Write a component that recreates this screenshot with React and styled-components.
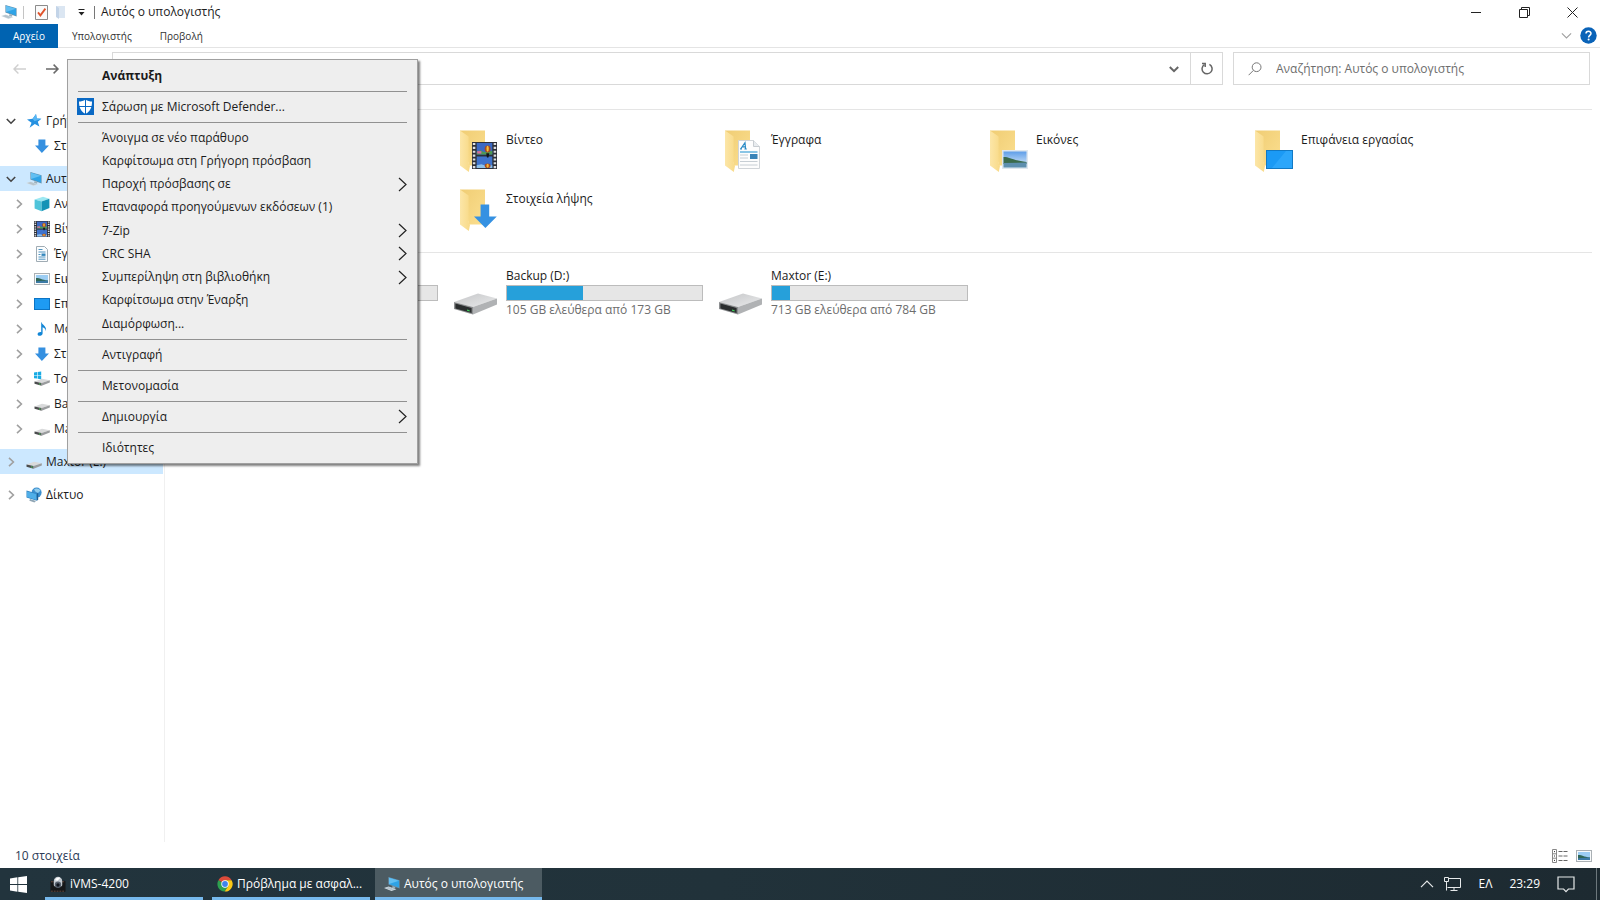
import { useState } from "react";
import styled, { createGlobalStyle } from "styled-components";


const GlobalStyle = createGlobalStyle`
  * {
    box-sizing: border-box;
  }

  body {
    margin: 0;
    background: #fff;
    color: #1b1b1b;
    font-family: "Open Sans", "Noto Sans", sans-serif;
    font-size: 12px;
    line-height: 18px;
  }

  button,
  input {
    font: inherit;
    color: inherit;
    border: 0;
    padding: 0;
    background: none;
  }

  a {
    color: inherit;
    text-decoration: none;
  }

  ul {
    margin: 0;
    padding: 0;
    list-style: none;
  }

  svg {
    display: block;
    flex: none;
  }
`

const Screen = styled.div`
  position: relative;
  display: flex;
  flex-direction: column;
  min-height: 100vh;
`

const TitleBar = styled.header`
  display: flex;
  align-items: center;
  height: 24px;
  padding: 0 4px 0 1px;
`

const QuickTools = styled.div`
  display: flex;
  align-items: center;
  gap: 6px;

  button {
    display: grid;
    place-items: center;
    width: 14px;
    height: 20px;
  }
`

const Divider = styled.span`
  width: 1px;
  height: 13px;
  margin-right: ${props => props.$dark ? "0" : "4px"};
  background: ${props => props.$dark ? "#777" : "#c4c4c4"};
`

const Title = styled.h1`
  margin: 0;
  padding-left: 6px;
  flex: 1;
  font-size: 12px;
  font-weight: 400;
`

const WindowButton = styled.button`
  display: grid;
  place-items: center;
  width: 48px;
  height: 24px;
`

const Ribbon = styled.nav`
  display: flex;
  align-items: center;
  height: 24px;
  padding-right: 3px;
  border-bottom: 1px solid #e4e4e4;
`

const RibbonTab = styled.button`
  height: 24px;
  width: ${props => props.$file ? "58px" : "auto"};
  padding: ${props => props.$file ? "0" : "0 14px"};
  font-size: 10px;
  color: ${props => props.$file ? "#fff" : "#333"};
  background: ${props => props.$file ? "#0063b1" : "transparent"};
`

const RibbonEnd = styled.div`
  display: flex;
  align-items: center;
  gap: 8px;
  margin-left: auto;
`

const AddressRow = styled.div`
  display: flex;
  align-items: center;
  padding: 4px 10px 4px 12px;
`

const NavButtons = styled.div`
  display: flex;
  gap: 16px;
  width: 100px;
`

const Address = styled.div`
  display: flex;
  align-items: center;
  flex: 1;
  height: 33px;
  border: 1px solid #d9d9d9;

  span {
    flex: 1;
    padding-left: 8px;
  }

  button {
    display: grid;
    place-items: center;
    width: 32px;
    height: 31px;
  }

  button:last-child {
    border-left: 1px solid #d9d9d9;
  }
`

const SearchBox = styled.label`
  display: flex;
  align-items: center;
  gap: 14px;
  width: 357px;
  height: 33px;
  margin-left: 10px;
  padding-left: 14px;
  border: 1px solid #d9d9d9;

  input {
    flex: 1;
    outline: 0;
  }

  input::placeholder {
    color: #6d6d6d;
    opacity: 1;
  }
`

const Body = styled.div`
  display: flex;
  flex: 1;
  padding-top: 11px;
`

const Tree = styled.ul`
  width: 165px;
  padding-top: 8px;
  border-right: 1px solid #f0f0f0;
`

const TreeRow = styled.li`
  margin-top: ${props => props.$spaced ? "8px" : "0"};

  a {
    display: flex;
    align-items: center;
    height: 25px;
    padding-left: ${props => props.$level ? "12px" : "4px"};
    margin-right: 1px;
    white-space: nowrap;
    background: ${props => props.$active ? "#cce8ff" : "transparent"};
  }
`

const Twisty = styled.span`
  display: grid;
  place-items: center;
  flex: none;
  width: 14px;
  margin-right: 8px;
`

const TreeLabel = styled.span`
  padding-left: 4px;
`

const Content = styled.main`
  flex: 1;
  padding-right: 8px;
`

const GroupHeader = styled.h2`
  display: flex;
  align-items: center;
  gap: 8px;
  height: 18px;
  margin: ${props => props.$next ? "9px 0 6px" : "0 0 9px"};
  padding-left: 10px;
  font-size: 12px;
  font-weight: 400;
  color: #1e3287;

  &::after {
    content: "";
    flex: 1;
    height: 1px;
    background: #e5e5e5;
  }
`

const TileGrid = styled.div`
  display: grid;
  grid-template-columns: repeat(auto-fill, 265px);
  row-gap: 11px;
  padding-left: 23px;
`

const Tile = styled.a`
  display: flex;
  gap: 5px;
`

const TileLabel = styled.span`
  padding-top: 4px;
`

const DriveInfo = styled.div`
  width: 197px;
`

const Meter = styled.div`
  height: 16px;
  border: 1px solid #bcbcbc;
  background: #e6e6e6;
`

const MeterFill = styled.div`
  height: 14px;
  background: #26a0da;
`

const DriveNote = styled.div`
  color: #6d6d6d;
  white-space: nowrap;
`

const StatusBar = styled.footer`
  display: flex;
  align-items: center;
  justify-content: space-between;
  height: 26px;
  padding: 2px 8px 0 15px;
  color: #2b3a55;

  div {
    display: flex;
    gap: 8px;
  }
`

// context menu floats over the tree and the folder list
const Menu = styled.div`
  position: absolute;
  left: 67px;
  top: 59px;
  width: 351px;
  padding: 5px 0 3px;
  border: 1px solid #a0a0a0;
  background: #eee;
  box-shadow: 2px 2px 2px rgba(0, 0, 0, 0.5);
`

const MenuGroup = styled.div`
  display: flex;
  flex-direction: column;
  justify-content: space-between;
  min-height: ${props => props.$long ? "209px" : "0"};
`

const MenuLine = styled.hr`
  height: 1px;
  margin: 3px 10px 4px;
  border: 0;
  background: #919191;
`

const MenuItem = styled.button`
  display: flex;
  align-items: center;
  width: 100%;
  height: 23px;
  padding: 0 10px 2px 9px;
  font-weight: ${props => props.$bold ? 700 : 400};
  text-align: left;

  > span:first-child {
    width: 25px;
  }

  > span:nth-child(2) {
    flex: 1;
  }
`

const Taskbar = styled.footer`
  display: flex;
  align-items: center;
  height: 32px;
  color: #fff;
  background: linear-gradient(90deg, #22343d, #21323a 45%, #1d2a31);
`

const StartButton = styled.button`
  display: grid;
  place-items: center;
  width: 36px;
  height: 32px;
  margin-right: 9px;
`

const TaskButton = styled.button`
  display: flex;
  align-items: center;
  gap: 4px;
  width: ${props => props.$active ? "167px" : "158px"};
  height: 32px;
  margin-right: ${props => props.$last ? "5px" : "9px"};
  padding: 0 0 0 ${props => props.$active ? "9px" : "5px"};
  box-shadow: inset 0 -3px #76b9ed;
  background: ${props => props.$active ? "#4c5b62" : "transparent"};
  white-space: nowrap;
`

const Tray = styled.div`
  display: flex;
  align-items: center;
  gap: 17px;
  margin-left: auto;

  button {
    display: grid;
    place-items: center;
    height: 32px;
  }

  button:first-child {
    margin-right: -7px;
  }
`

const ShowDesktop = styled.span`
  width: 1px;
  height: 32px;
  margin: 0 3px 0 4px;
  background: #6c777c;
`


function Chevron({ dir = "right", size = 10, color = "#a0a0a0", width = 2 }) {
    const d = dir === "right" ? "M3 0.8 7.4 5 3 9.2" : "M0.8 3 5 7.2 9.2 3";
    return (
        <svg width={size} height={size} viewBox="0 0 10 10" fill="none" stroke={color} strokeWidth={width}>
            <path d={d} />
        </svg>
    )
}

function PcIcon() {
    return (
        <svg width="16" height="16" viewBox="0 0 16 16">
            <path d="M0 12 4.6 10.4 12.4 13.2 7.5 15z" fill="#d3dde3" />
            <path d="M1.4 12 4.8 11 10.5 13.2 7.3 14.3z" fill="#b5c3cc" />
            <path d="M4.4 1 15.6 4.2V12.4L4.4 8.4z" fill="#6593b0" />
            <path d="M5 1.8 15 4.8V11.6L5 8z" fill="#2fa3e6" />
            <path d="M5 1.8 15 4.8 5 8z" fill="#62bff2" />
            <path d="M8.6 9.9 11.4 10.9 11 12.8 8 11.8z" fill="#9db0bb" />
        </svg>
    )
}

function StarIcon() {
    return (
        <svg width="16" height="16" viewBox="0 0 16 16">
            <path d="M10 1 10.8 5.6 15.4 5.8 11.8 8.8 13.4 13.6 8.8 11 3.6 14.8 5.5 9.8 1 6.4 6.6 5.8z" fill="#2590e0" />
            <path d="M10 1 10.8 5.6 15.4 5.8 8.5 8.3 6.6 5.8z" fill="#58b6f4" />
        </svg>
    )
}

function DownIcon() {
    return (
        <svg width="16" height="16" viewBox="0 0 16 16">
            <path d="M4.4 1.4H11.4V7.4H15L7.9 15 1 7.4H4.4z" fill="#3590e0" />
        </svg>
    )
}

function CubeIcon() {
    return (
        <svg width="16" height="16" viewBox="0 0 16 16">
            <path d="M0.6 3.4 9 0.8 15.4 2.8 7.6 5.6z" fill="#9ce8f2" />
            <path d="M0.6 3.4 7.6 5.6V15.2L0.6 12.4z" fill="#4fc4da" />
            <path d="M7.6 5.6 15.4 2.8V12L7.6 15.2z" fill="#1593b6" />
        </svg>
    )
}

function FilmArt() {
    return (
        <>
            <rect width="24" height="28" fill="#2d2f37" />
            <path d="M2 1V28M22 1V28" stroke="#dfe1e4" strokeWidth="2.4" strokeDasharray="2.2 1.8" />
            <rect x="4.5" y="1" width="15" height="12" fill="#3c69c4" />
            <rect x="4.5" y="15" width="15" height="12" fill="#3f73cc" />
            <path d="M4.5 10 8 8.5 12 10.5 19.5 9V13H4.5z" fill="#4f9a54" />
            <path d="M5 9.5h4v2.5h-4z" fill="#d869a4" />
            <path d="M4.5 24 9 23 14 25 19.5 24V27H4.5z" fill="#8ec1ea" />
            <ellipse cx="15" cy="7.2" rx="2.8" ry="3.6" fill="#a8481f" />
            <ellipse cx="15" cy="7" rx="1.1" ry="3.2" fill="#f4c23b" />
            <path d="M13.6 11.6h3l-0.8 4.4h-1.4z" fill="#151515" />
            <ellipse cx="15" cy="24.6" rx="2.8" ry="2.4" fill="#a8481f" />
            <ellipse cx="15" cy="24.6" rx="1.1" ry="2" fill="#f1b936" />
        </>
    )
}

function FilmIcon() {
    return <svg width="16" height="16" viewBox="0 0 24 28" preserveAspectRatio="none"><FilmArt /></svg>
}

function DocIcon() {
    return (
        <svg width="16" height="16" viewBox="0 0 16 16">
            <path d="M2.5 0.5H10.5L13.5 3.5V15.5H2.5z" fill="#fbfdfe" stroke="#a0acb4" />
            <path d="M4.5 3.5h4M4.5 6h7M4.5 8.5h2M4.5 11h7M4.5 13.2h7" stroke="#4e93c0" />
            <path d="M7.5 7.5h4v2.4h-4z" fill="#3487bd" />
        </svg>
    )
}

function PictureIcon() {
    return (
        <svg width="16" height="16" viewBox="0 0 16 16">
            <rect x="0.5" y="2.5" width="15" height="11" fill="#f8fafb" stroke="#aab0b4" />
            <rect x="2" y="4" width="12" height="8" fill="#9ccdf3" />
            <path d="M2 7C5 6.4 7 8.6 14 9.4V12H2z" fill="#2f6655" />
            <path d="M2 10.2 14 9.6V12H2z" fill="#3c7aa6" />
        </svg>
    )
}

function DesktopIcon() {
    return (
        <svg width="16" height="16" viewBox="0 0 16 16">
            <rect x="0.5" y="2.5" width="15" height="11" fill="#1e9bf3" stroke="#0c74c4" />
        </svg>
    )
}

function MusicIcon() {
    return (
        <svg width="16" height="16" viewBox="0 0 16 16">
            <path d="M7.4 1C8 4 13 5 12 10.2 11.6 7.6 10 6.6 8.6 6.2V12.4C8.6 14.6 4 15.8 3.6 13.4 3.4 11.6 6 10.8 7.2 11.2V1z" fill="#1286d6" />
        </svg>
    )
}

function DriveIcon({ windows }) {
    return (
        <svg width="16" height="16" viewBox="0 0 16 16">
            <path d="M0.5 10.6 8 7.8 15.8 9.2 7.6 12z" fill="#d9dadb" />
            <path d="M0.5 10.6 7.6 12V14.8L0.5 12.8z" fill="#4b4d4e" />
            <path d="M7.6 12 15.8 9.2V11.4L7.6 14.8z" fill="#9a9c9e" />
            <path d="M5 13h1.6" stroke="#4bd05c" />
            {windows && <path d="M0 1.4 3 1V4H0zM3.6 0.9 7.2 0.4V4H3.6zM0 4.6H3V7.6L0 7.2zM3.6 4.6H7.2V8.2L3.6 7.7z" fill="#18abe4" />}
        </svg>
    )
}

function NetworkIcon() {
    return (
        <svg width="16" height="16" viewBox="0 0 16 16">
            <circle cx="10.6" cy="5.6" r="5" fill="#3c8fcf" />
            <path d="M8 2.4C10 0.6 13 1.4 14.6 3.4L12 6 9.6 4.8z" fill="#8fcbec" />
            <path d="M0.5 3.6 10.8 6.6V13.8L0.5 10.4z" fill="#2f83c2" />
            <path d="M1 4.4 10.4 7.1V13.1L1 10z" fill="#4faee8" />
            <path d="M4 12 10 14 8.4 15.4 3.4 13.8z" fill="#8fa5b3" />
            <path d="M10.8 6.6 12.2 6V12.8L10.8 13.8z" fill="#1c5e96" />
        </svg>
    )
}

function FolderTileIcon({ kind }) {
    return (
        <svg width="48" height="48" viewBox="0 0 48 48" aria-hidden="true">
            <defs>
                <linearGradient id="back" x1="0" y1="0" x2="1" y2="1">
                    <stop offset="0" stopColor="#f0cd74" />
                    <stop offset="1" stopColor="#fbdf90" />
                </linearGradient>
                <linearGradient id="front" x1="0" y1="0" x2="1" y2="0">
                    <stop offset="0" stopColor="#fce6a8" />
                    <stop offset="1" stopColor="#f8da88" />
                </linearGradient>
                <linearGradient id="sky" x1="0" y1="0" x2="0" y2="1">
                    <stop offset="0" stopColor="#5f9ee8" />
                    <stop offset="1" stopColor="#e2f0fb" />
                </linearGradient>
            </defs>
            <path d="M7 3.5H32V38.5H16z" fill="url(#back)" />
            <path d="M7 3.5 15.6 9.4V36L17 39 15.8 45 7 38.6z" fill="url(#front)" />
            {kind === "video" && (
                <svg x="19" y="15" width="25" height="27" viewBox="0 0 24 28" preserveAspectRatio="none"><FilmArt /></svg>
            )}
            {kind === "docs" && (
                <g>
                    <path d="M20.5 13.5H35.5L41.5 19.5V41.5H20.5z" fill="#fdfdfd" stroke="#d0d4d8" />
                    <path d="M35.5 13.5V19.5H41.5" fill="#e8ecef" stroke="#c7ccd1" />
                    <path d="M22.6 22 27 15.6 27.6 22M24 19.8H27.6M22 22h2M26.4 22h2.4" stroke="#2b8bc6" strokeWidth="1.2" fill="none" />
                    <path d="M22 25h17.5" stroke="#3fa0d6" strokeWidth="1.2" />
                    <path d="M22 28h8M22 31h8M22 34.5h17.5M22 38h17.5" stroke="#c7ced4" />
                    <rect x="32" y="27" width="7.5" height="5" fill="#3a84b8" />
                </g>
            )}
            {kind === "pictures" && (
                <g>
                    <rect x="19" y="23" width="26" height="19" fill="#dfe7ee" />
                    <rect x="20.5" y="24.5" width="23" height="16" fill="url(#sky)" />
                    <path d="M20.5 30C26 29.6 30 33.6 43.5 35V37H20.5z" fill="#3b6b4c" />
                    <path d="M20.5 36 43.5 35.6V40.5H20.5z" fill="#5d8fae" />
                </g>
            )}
            {kind === "desktop" && (
                <g>
                    <rect x="18.5" y="23.5" width="26" height="18" fill="#1b9af5" stroke="#1279c4" />
                    <path d="M24 41 38 24H44V41z" fill="#2ca6fa" />
                </g>
            )}
            {kind === "downloads" && <path d="M27.6 18.6H36.2V30.4H43.8L32.4 42 21 30.4H27.6z" fill="#3591e2" />}
            {kind === "music" && <path d="M30 18C31 24 42 26 40 36 38 30 34 29 33 28.6V38C33 43 23 44 23 39.6 23 36 28 35.4 30 36z" fill="#1286d6" />}
            {kind === "objects" && <path d="M20 24 32 20 44 24V36L32 42 20 36z" fill="#3bbad2" />}
        </svg>
    )
}

function DriveTileIcon() {
    return (
        <svg width="48" height="53" viewBox="0 0 48 53" aria-hidden="true">
            <defs>
                <linearGradient id="lid" x1="0" y1="0" x2="1" y2="1">
                    <stop offset="0" stopColor="#c4c5c7" />
                    <stop offset="1" stopColor="#eaebec" />
                </linearGradient>
            </defs>
            <path d="M1 35 25 26.4 44 31.4 20 40z" fill="url(#lid)" />
            <path d="M20 40 44 31.4V37.6L20 47.6z" fill="#b0b2b4" />
            <path d="M1 35 20 40V47.6L1 42z" fill="#8d8f91" />
            <path d="M2.4 36.6 18.6 41V46L2.4 41.4z" fill="#2a2d2e" />
            <path d="M14 42.4 16.6 43.2V44.6L14 43.8z" fill="#3fcf5a" />
        </svg>
    )
}

function WindowsLogo() {
    return (
        <svg width="17" height="17" viewBox="0 0 17 17" fill="#fff">
            <path d="M0 2.4 7.4 1.3V8H0zM8.2 1.2 17 0V8H8.2zM0 8.9H7.4V15.7L0 14.6zM8.2 8.9H17V17L8.2 15.8z" />
        </svg>
    )
}

function CameraIcon() {
    return (
        <svg width="16" height="17" viewBox="0 0 17 17">
            <rect x="0.5" y="4.5" width="16" height="12" rx="1" fill="#161819" />
            <path d="M1 15.6h15M1 5.6h15" stroke="#6d4e42" strokeDasharray="2 1" />
            <path d="M4 5C4 -1.4 13 -1.4 13 5V9C13 12 4 12 4 9z" fill="#c3cad0" />
            <circle cx="8.5" cy="8.8" r="3.4" fill="#56606c" />
            <circle cx="8.5" cy="9" r="1.8" fill="#10151e" />
            <path d="M5.4 4C6.2 1 9 0.6 10.8 1.6L8 4.6z" fill="#fff" />
        </svg>
    )
}

function ChromeIcon() {
    return (
        <svg width="16" height="16" viewBox="0 0 16 16">
            <path d="M8 8 1.4 4.2A7.6 7.6 0 0 1 14.6 4.2H8z" fill="#dd4b3a" />
            <path d="M8 8 1.4 4.2A7.6 7.6 0 0 0 7.6 15.6L11.3 9.9z" fill="#2da04f" />
            <path d="M8 8V4.2H14.6A7.6 7.6 0 0 1 7.6 15.6L11.3 9.9z" fill="#fbc916" />
            <circle cx="8" cy="8" r="3.7" fill="#fff" />
            <circle cx="8" cy="8" r="2.9" fill="#3f83ea" />
        </svg>
    )
}

function ShieldIcon() {
    return (
        <svg width="17" height="17" viewBox="0 0 17 17">
            <rect width="17" height="17" fill="#0a69c4" />
            <path d="M8.5 1.4C10.4 3 13 3.4 15 3.4 15 9.4 13.2 13.4 8.5 15.8 3.8 13.4 2 9.4 2 3.4 4 3.4 6.6 3 8.5 1.4z" fill="#fff" />
            <path d="M8.5 1V16M1.6 8.5H15.4" stroke="#0a69c4" strokeWidth="1" />
        </svg>
    )
}


const tree = [
    { label: "Γρήγορη πρόσβαση", icon: <StarIcon />, open: true },
    { label: "Στοιχεία λήψης", icon: <DownIcon />, level: 1, leaf: true },
    { label: "Αυτός ο υπολογιστής", icon: <PcIcon />, open: true, spaced: true, active: true },
    { label: "Αντικείμενα 3D", icon: <CubeIcon />, level: 1 },
    { label: "Βίντεο", icon: <FilmIcon />, level: 1 },
    { label: "Έγγραφα", icon: <DocIcon />, level: 1 },
    { label: "Εικόνες", icon: <PictureIcon />, level: 1 },
    { label: "Επιφάνεια εργασίας", icon: <DesktopIcon />, level: 1 },
    { label: "Μουσική", icon: <MusicIcon />, level: 1 },
    { label: "Στοιχεία λήψης", icon: <DownIcon />, level: 1 },
    { label: "Τοπικός Δίσκος (C:)", icon: <DriveIcon windows />, level: 1 },
    { label: "Backup (D:)", icon: <DriveIcon />, level: 1 },
    { label: "Maxtor (E:)", icon: <DriveIcon />, level: 1 },
    { label: "Maxtor (E:)", icon: <DriveIcon />, spaced: true, active: true },
    { label: "Δίκτυο", icon: <NetworkIcon />, spaced: true },
]

const folders = [
    { label: "Αντικείμενα 3D", kind: "objects" },
    { label: "Βίντεο", kind: "video" },
    { label: "Έγγραφα", kind: "docs" },
    { label: "Εικόνες", kind: "pictures" },
    { label: "Επιφάνεια εργασίας", kind: "desktop" },
    { label: "Μουσική", kind: "music" },
    { label: "Στοιχεία λήψης", kind: "downloads" },
]

const drives = [
    { label: "Τοπικός Δίσκος (C:)", used: 50, note: "" },
    { label: "Backup (D:)", used: 39, note: "105 GB ελεύθερα από 173 GB" },
    { label: "Maxtor (E:)", used: 9, note: "713 GB ελεύθερα από 784 GB" },
]

const menuGroups = [
    [{ label: "Ανάπτυξη", bold: true }],
    [{ label: "Σάρωση με Microsoft Defender...", icon: <ShieldIcon /> }],
    [
        { label: "Άνοιγμα σε νέο παράθυρο" },
        { label: "Καρφίτσωμα στη Γρήγορη πρόσβαση" },
        { label: "Παροχή πρόσβασης σε", sub: true },
        { label: "Επαναφορά προηγούμενων εκδόσεων (1)" },
        { label: "7-Zip", sub: true },
        { label: "CRC SHA", sub: true },
        { label: "Συμπερίληψη στη βιβλιοθήκη", sub: true },
        { label: "Καρφίτσωμα στην Έναρξη" },
        { label: "Διαμόρφωση..." },
    ],
    [{ label: "Αντιγραφή" }],
    [{ label: "Μετονομασία" }],
    [{ label: "Δημιουργία", sub: true }],
    [{ label: "Ιδιότητες" }],
]


function ContextMenu() {
    return (
        <Menu role="menu">
            {menuGroups.map((group, index) => (
                <div key={index}>
                    {index > 0 && <MenuLine />}
                    <MenuGroup $long={group.length > 1}>
                        {group.map(item => (
                            <MenuItem key={item.label} role="menuitem" $bold={item.bold}>
                                <span>{item.icon}</span>
                                <span>{item.label}</span>
                                {item.sub && (
                                    <svg width="9" height="15" viewBox="0 0 9 15" fill="none" stroke="#222" strokeWidth="1.2">
                                        <path d="M1 1 8 7.5 1 14" />
                                    </svg>
                                )}
                            </MenuItem>
                        ))}
                    </MenuGroup>
                </div>
            ))}
        </Menu>
    )
}

function App() {
    const [search, setSearch] = useState("");

    return (
        <Screen>
            <GlobalStyle />
            <TitleBar>
                <QuickTools>
                    <PcIcon />
                    <Divider />
                    <button aria-label="Ιδιότητες">
                        <svg width="13" height="15" viewBox="0 0 13 15" fill="none">
                            <path d="M0.5 0.5h12v14h-12z" fill="#fafafa" stroke="#8b8b8b" />
                            <path d="M3 7.4 5.4 10.4 10.4 3.6" stroke="#e0532b" strokeWidth="1.8" />
                        </svg>
                    </button>
                    <button aria-label="Νέος φάκελος">
                        <svg width="10" height="14" viewBox="0 0 10 14">
                            <path d="M0 1h9v12H3L0 11z" fill="#dbe6f2" />
                            <path d="M0 1 3 3v11L0 12z" fill="#c3d4e8" />
                        </svg>
                    </button>
                    <button aria-label="Προσαρμογή">
                        <svg width="7" height="7" viewBox="0 0 7 7">
                            <path d="M0.5 0h6v1h-6zM0.5 3h6L3.5 6.4z" fill="#222" />
                        </svg>
                    </button>
                    <Divider $dark />
                </QuickTools>
                <Title>Αυτός ο υπολογιστής</Title>
                <WindowButton aria-label="Ελαχιστοποίηση">
                    <svg width="10" height="10" viewBox="0 0 10 10"><path d="M0 5.5h10" stroke="#222" /></svg>
                </WindowButton>
                <WindowButton aria-label="Επαναφορά">
                    <svg width="11" height="11" viewBox="0 0 11 11" fill="none" stroke="#222">
                        <path d="M0.5 2.5h8v8h-8zM2.5 2.5v-2h8v8h-2" />
                    </svg>
                </WindowButton>
                <WindowButton aria-label="Κλείσιμο">
                    <svg width="11" height="11" viewBox="0 0 11 11"><path d="M0.5 0.5 10.5 10.5M10.5 0.5 0.5 10.5" stroke="#222" /></svg>
                </WindowButton>
            </TitleBar>
            <Ribbon>
                <RibbonTab $file>Αρχείο</RibbonTab>
                <RibbonTab>Υπολογιστής</RibbonTab>
                <RibbonTab>Προβολή</RibbonTab>
                <RibbonEnd>
                    <button aria-label="Ανάπτυξη κορδέλας"><Chevron dir="down" size={11} width={1} /></button>
                    <button aria-label="Βοήθεια">
                        <svg width="17" height="17" viewBox="0 0 17 17">
                            <circle cx="8.5" cy="8.5" r="8.2" fill="#0a63b8" />
                            <path d="M6 6.6C6 3.6 11 3.6 11 6.5 11 8.4 8.6 8.4 8.6 10.4" stroke="#fff" strokeWidth="1.5" fill="none" />
                            <circle cx="8.6" cy="12.6" r="1" fill="#fff" />
                        </svg>
                    </button>
                </RibbonEnd>
            </Ribbon>
            <AddressRow>
                <NavButtons>
                    <button aria-label="Πίσω">
                        <svg width="16" height="12" viewBox="0 0 16 12" fill="none" stroke="#cfcfcf" strokeWidth="1.4">
                            <path d="M14 6H2M6.4 1.6 2 6 6.4 10.4" />
                        </svg>
                    </button>
                    <button aria-label="Εμπρός">
                        <svg width="16" height="12" viewBox="0 0 16 12" fill="none" stroke="#6a6a6a" strokeWidth="1.5">
                            <path d="M2 6H14M9.6 1.6 14 6 9.6 10.4" />
                        </svg>
                    </button>
                </NavButtons>
                <Address>
                    <span>Αυτός ο υπολογιστής</span>
                    <button aria-label="Προηγούμενες θέσεις"><Chevron dir="down" size={10} color="#666" /></button>
                    <button aria-label="Ανανέωση">
                        <svg width="12" height="13" viewBox="0 0 12 13" fill="none" stroke="#666" strokeWidth="1.5">
                            <path d="M3.4 2.6A5 5 0 1 0 8.4 2.4" />
                            <path d="M1 1.4H4.2V5" />
                        </svg>
                    </button>
                </Address>
                <SearchBox>
                    <svg width="14" height="14" viewBox="0 0 14 14" fill="none" stroke="#777">
                        <circle cx="8.6" cy="5.2" r="4.4" />
                        <path d="M5.4 8.4 0.6 13.2" />
                    </svg>
                    <input
                        type="text"
                        aria-label="Αναζήτηση"
                        placeholder="Αναζήτηση: Αυτός ο υπολογιστής"
                        value={search}
                        onChange={e => setSearch(e.target.value)}
                    />
                </SearchBox>
            </AddressRow>

            <Body>
                <Tree>
                    {tree.map((row, index) => (
                        <TreeRow key={index} $level={row.level} $spaced={row.spaced} $active={row.active}>
                            <a href="#">
                                <Twisty>
                                    {!row.leaf && <Chevron dir={row.open ? "down" : "right"} color={row.open ? "#444" : "#a0a0a0"} width={1.6} />}
                                </Twisty>
                                {row.icon}
                                <TreeLabel>{row.label}</TreeLabel>
                            </a>
                        </TreeRow>
                    ))}
                </Tree>
                <Content>
                    <GroupHeader>Φάκελοι (7)</GroupHeader>
                    <TileGrid>
                        {folders.map(folder => (
                            <Tile href="#" key={folder.kind}>
                                <FolderTileIcon kind={folder.kind} />
                                <TileLabel>{folder.label}</TileLabel>
                            </Tile>
                        ))}
                    </TileGrid>
                    <GroupHeader $next>Συσκευές και μονάδες (3)</GroupHeader>
                    <TileGrid>
                        {drives.map(drive => (
                            <Tile href="#" key={drive.label}>
                                <DriveTileIcon />
                                <DriveInfo>
                                    <div>{drive.label}</div>
                                    <Meter><MeterFill style={{ width: `${drive.used}%` }} /></Meter>
                                    <DriveNote>{drive.note}</DriveNote>
                                </DriveInfo>
                            </Tile>
                        ))}
                    </TileGrid>
                </Content>
            </Body>

            <StatusBar>
                <span>10 στοιχεία</span>
                <div>
                    <button aria-label="Λεπτομέρειες">
                        <svg width="16" height="14" viewBox="0 0 16 14" fill="none">
                            <path d="M0.5 0.5h4v13h-4zM0.5 4.8h4M0.5 9.2h4" stroke="#888" />
                            <path d="M2 2.6h1M2 7h1M2 11.4h1" stroke="#333" />
                            <path d="M6.5 2.5h9M6.5 7h9M6.5 11.5h9" stroke="#666" strokeDasharray="4 1" />
                        </svg>
                    </button>
                    <button aria-label="Μεγάλα εικονίδια"><PictureIcon /></button>
                </div>
            </StatusBar>

            <Taskbar>
                <StartButton aria-label="Έναρξη"><WindowsLogo /></StartButton>
                <TaskButton><CameraIcon /><span>iVMS-4200</span></TaskButton>
                <TaskButton $last><ChromeIcon /><span>Πρόβλημα με ασφαλ...</span></TaskButton>
                <TaskButton $active><PcIcon /><span>Αυτός ο υπολογιστής</span></TaskButton>
                <Tray>
                    <button aria-label="Κρυφά εικονίδια">
                        <svg width="14" height="8" viewBox="0 0 14 8" fill="none" stroke="#e6e9ea" strokeWidth="1.2"><path d="M1 7.2 7 1.2 13 7.2" /></svg>
                    </button>
                    <button aria-label="Δίκτυο">
                        <svg width="17" height="15" viewBox="0 0 17 15" fill="none" stroke="#e6e9ea">
                            <path d="M5 1.5H16.5V10.5H3.5M10 10.5V13.5M6.5 13.5H13.5" />
                            <path d="M0.5 0.5h4v4h-4zM2.5 4.5V13.5" />
                        </svg>
                    </button>
                    <button>ΕΛ</button>
                    <span>23:29</span>
                    <button aria-label="Ειδοποιήσεις">
                        <svg width="18" height="17" viewBox="0 0 18 17" fill="none" stroke="#e6e9ea" strokeWidth="1.2">
                            <path d="M1 1H17V13H11.4L9 15.6 6.6 13H1z" />
                        </svg>
                    </button>
                    <ShowDesktop />
                </Tray>
            </Taskbar>
            <ContextMenu />
        </Screen>
    )
}

export default App;
